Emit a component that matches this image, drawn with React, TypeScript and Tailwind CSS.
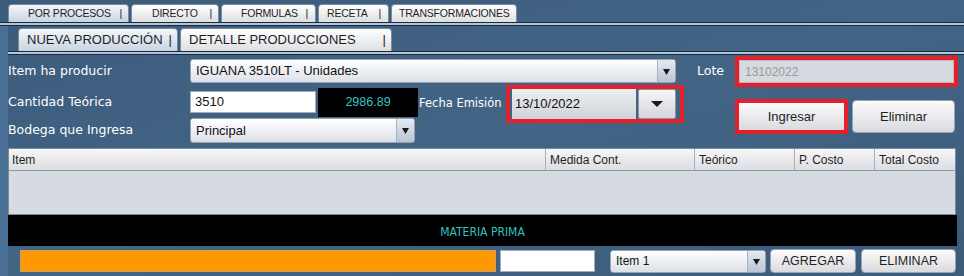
const arial = "font-['Liberation_Sans',Arial,sans-serif]";
const comic = "font-['Comic_Sans_MS','DejaVu_Sans',sans-serif]";
const narrow = "font-['Liberation_Sans_Narrow','Arial_Narrow','Liberation_Sans',sans-serif]";

interface TabProps {
  label: string;
  width: string;
  pad: string;
  selected?: boolean;
  big?: boolean;
  bar?: boolean;
}

function Tab({ label, width, pad, selected, big, bar = true }: TabProps) {
  return (
    <div
      className={`${width} ${pad} ${big ? "h-[23px] text-[13px]" : "h-[18px] text-[10.5px] tracking-[-0.2px]"} flex items-center justify-between overflow-hidden rounded-t-[4px] border border-b-0 border-[#7b8b9d] text-[#1e1e1e] whitespace-nowrap ${
        selected
          ? "bg-gradient-to-b from-[#f3f6fa] to-[#c9d5e2]"
          : "bg-gradient-to-b from-white to-[#dedfe3]"
      }`}
    >
      <span>{label}</span>
      {bar && <span>|</span>}
    </div>
  );
}

function Rule() {
  return <div className="h-[4px] border-y border-[#182a3c] bg-[#b3c5d8]" />;
}

function Arrow({ wide }: { wide?: boolean }) {
  return (
    <svg width={wide ? 12 : 7} height={wide ? 6 : 7} viewBox={wide ? "0 0 12 6" : "0 0 7 7"}>
      <path d={wide ? "M0 0h12L6 6z" : "M0 1h7L3.5 7z"} fill="#1a1a1a" />
    </svg>
  );
}

function Combo({ text, width, height, small }: { text: string; width: string; height: string; small?: boolean }) {
  return (
    <div
      className={`${width} ${height} flex items-stretch rounded-[3px] border border-[#98a3b1] bg-gradient-to-b from-white to-[#dce0e7] overflow-hidden`}
    >
      <div className={`flex-1 flex items-center pl-[5px] text-[#111] ${small ? `${narrow} text-[12px]` : "text-[13px]"}`}>
        {text}
      </div>
      <div className="w-[18px] flex items-center justify-center border-l border-[#a7b2c0] bg-gradient-to-b from-[#e4eaf1] to-[#b9c6d4]">
        <Arrow />
      </div>
    </div>
  );
}

function Button({ text, className }: { text: string; className: string }) {
  return (
    <div
      className={`${className} flex items-center justify-center rounded-[4px] border border-[#9aa4b1] bg-gradient-to-b from-[#fbfbfb] to-[#dadbdf] text-[#1e1e1e]`}
    >
      {text}
    </div>
  );
}

export default function App() {
  return (
    <div className={`w-[964px] h-[276px] overflow-hidden bg-gradient-to-br from-[#3b5b7b] via-[#436585] to-[#3b5b7a] ${arial}`}>
      <div className="flex items-end h-[22px] pl-2 gap-[2px]">
        <Tab label="POR PROCESOS" width="w-[121px]" pad="pl-[19px] pr-[6px]" selected />
        <Tab label="DIRECTO" width="w-[88px]" pad="pl-[20px] pr-[6px]" />
        <Tab label="FORMULAS" width="w-[95px]" pad="pl-[19px] pr-[7px]" />
        <Tab label="RECETA" width="w-[71px]" pad="pl-[8px] pr-[7px]" />
        <Tab label="TRANSFORMACIONES" width="w-[126px]" pad="pl-[7px] pr-[4px]" bar={false} />
      </div>
      <Rule />

      <div className="flex h-[250px]">
        <div className="w-2 bg-[#4a6f95]" />
        <div className="flex-1 flex flex-col">
          <div className="flex items-end h-[25px] pl-[10px] gap-[2px]">
            <Tab label="NUEVA PRODUCCIÓN" width="w-[160px]" pad="pl-[8px] pr-[5px]" selected big />
            <Tab label="DETALLE PRODUCCIONES" width="w-[212px]" pad="pl-[8px] pr-[5px]" big />
          </div>
          <Rule />

          <div className="flex">
            {/* left side of the form */}
            <div className="w-[689px] flex flex-col">
              <div className="flex items-center h-[24px] mt-[4px]">
                <span className={`w-[182px] text-[12.5px] text-white ${comic}`}>Item ha producir</span>
                <Combo text="IGUANA 3510LT - Unidades" width="w-[486px]" height="h-[24px]" />
              </div>

              <div className="flex items-center h-[30px] mt-[4px]">
                <span className={`w-[182px] text-[12.5px] text-white ${comic}`}>Cantidad Teórica</span>
                <div className="w-[126px] h-[22px] bg-white border border-[#a3adb9] flex items-center pl-[4px] text-[13px] text-[#111]">
                  3510
                </div>
                <div className="w-[100px] h-[29px] ml-[2px] bg-black flex items-center justify-center text-[12.5px] text-[#36c3c1]">
                  2986.89
                </div>
                <span className={`w-[88px] pl-[1px] mt-[4px] whitespace-nowrap text-[11.5px] text-white ${comic}`}>
                  Fecha Emisión
                </span>
                <div className="w-[178px] h-[38px] mt-[4px] border-[4px] border-[#e3202b] flex items-stretch pl-[2px] pr-[4px]">
                  <div className="w-[124px] flex items-center pl-[3px] text-[13px] text-[#111] bg-gradient-to-b from-[#eceef1] to-[#cfd3d9]">
                    13/10/2022
                  </div>
                  <div className="w-[38px] ml-[2px] flex items-center justify-center rounded-[2px] border border-[#8c96a3] bg-gradient-to-b from-[#f5f6f8] to-[#d3d6db]">
                    <Arrow wide />
                  </div>
                </div>
              </div>

              <div className="flex items-center h-[25px] mt-[1px]">
                <span className={`w-[182px] text-[12.5px] text-white ${comic}`}>Bodega que Ingresa</span>
                <Combo text="Principal" width="w-[225px]" height="h-[25px]" />
              </div>
            </div>

            {/* right side of the form */}
            <div className="flex flex-col">
              <div className="flex items-center mt-[1px]">
                <span className={`w-[38px] text-[12.5px] text-white ${comic}`}>Lote</span>
                <div className="w-[223px] h-[31px] border-[4px] border-[#e3202b] flex">
                  <div className="flex-1 flex items-center pl-[5px] bg-[#d6d9df] border border-[#b4bcc6] text-[12px] text-[#9a9a9a]">
                    13102022
                  </div>
                </div>
              </div>
              <div className="flex items-center mt-[12px] pl-[38px]">
                <div className="w-[113px] h-[35px] border-[4px] border-[#e3202b] flex">
                  <div className="flex-1 flex items-center justify-center bg-gradient-to-b from-[#fbfbfb] to-[#dadbdf] text-[13px] text-[#1e1e1e]">
                    Ingresar
                  </div>
                </div>
                <Button text="Eliminar" className="w-[103px] h-[33px] ml-[4px] text-[13px]" />
              </div>
            </div>
          </div>

          {/* table */}
          <div className={`w-[948px] mt-[5px] border border-[#7b8c9f] ${narrow} text-[12px] text-[#1e1e1e]`}>
            <div className="flex h-[22px] bg-gradient-to-b from-[#f7f7f8] to-[#dcdde2] border-b border-[#8c99a8]">
              <div className="w-[537px] pl-[3px] flex items-center border-r border-[#a6b0bc]">Item</div>
              <div className="w-[149px] pl-[4px] flex items-center border-r border-[#a6b0bc]">Medida Cont.</div>
              <div className="w-[100px] pl-[4px] flex items-center border-r border-[#a6b0bc]">Teórico</div>
              <div className="w-[80px] pl-[4px] flex items-center border-r border-[#a6b0bc]">P. Costo</div>
              <div className="flex-1 pl-[4px] flex items-center">Total Costo</div>
            </div>
            <div className="h-[43px] bg-[#d6dae1]" />
          </div>

          <div className="w-[949px] h-[31px] bg-black flex items-center justify-center pt-[3px]">
            <span className="text-[12px] text-[#2ec3c3] font-['DejaVu_Sans_Condensed','Liberation_Sans_Narrow',sans-serif]">
              MATERIA PRIMA
            </span>
          </div>

          <div className="flex items-center h-[30px] pl-[12px]">
            <div className="w-[476px] h-[22px] bg-[#ff9800] border border-[#c9a266]" />
            <div className="w-[95px] h-[22px] ml-[4px] bg-white border border-[#a3adb9]" />
            <div className="ml-[15px]">
              <Combo text="Item 1" width="w-[156px]" height="h-[23px]" small />
            </div>
            <Button text="AGREGAR" className={`w-[86px] h-[24px] ml-[4px] text-[12.5px] ${narrow}`} />
            <Button text="ELIMINAR" className={`w-[95px] h-[24px] ml-[5px] text-[12.5px] ${narrow}`} />
          </div>
        </div>
      </div>
    </div>
  );
}
